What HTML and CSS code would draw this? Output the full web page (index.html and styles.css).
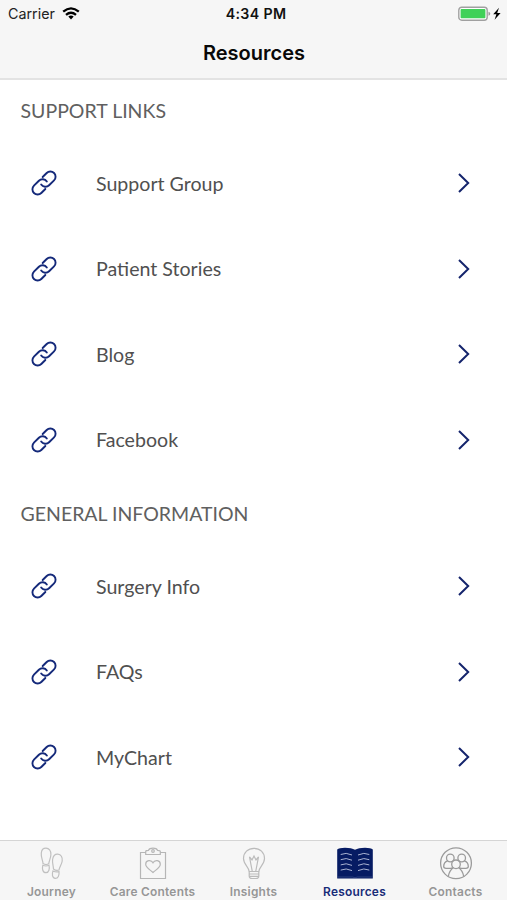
FILE: index.html
```html
<!DOCTYPE html>
<html lang="en">
<head>
<meta charset="utf-8">
<title>Resources</title>
<link rel="stylesheet" href="styles.css">
</head>
<body>
<svg class="defs" width="0" height="0" aria-hidden="true">
  <symbol id="link" viewBox="-14 -14 28 28">
    <g transform="rotate(-45)" fill="none" stroke="currentColor" stroke-width="1.9" stroke-linecap="round">
      <path d="M-3.300 5.200H-9A5.200 5.200 0 0 1-9-5.200H-2A5.200 5.200 0 0 1 3 1"/>
      <path d="M3.300-5.200H9A5.200 5.200 0 0 1 9 5.200H2A5.200 5.200 0 0 1-3-1"/>
    </g>
  </symbol>
  <symbol id="chevron" viewBox="0 0 14 22">
    <path d="M2 2L11.2 11L2 20" fill="none" stroke="currentColor" stroke-width="2"/>
  </symbol>
</svg>
<div class="screen">
  <header class="header">
    <div class="status">
      <div class="carrier"><span>Carrier</span>
        <svg width="18" height="13" viewBox="0 0 18 13"><g fill="none" stroke="#000" stroke-width="2.3"><path d="M1.2 4.7Q9-2 16.8 4.7"/><path d="M4 7.8Q9 3.6 14 7.8"/></g><path d="M6.3 9.6Q9 7.6 11.7 9.6L9 12.4Z"/></svg>
      </div>
      <div class="time">4:34 PM</div>
      <div class="power">
        <svg width="46" height="16" viewBox="0 0 46 16"><rect x=".8" y="1.2" width="28.4" height="13" rx="3" fill="#fff" stroke="#a0a0a0" stroke-width="1.4"/><rect x="2.600" y="3.100" width="24.800" height="9.200" rx=".8" fill="#3fd158"/><path d="M30.500 5.700Q32.300 6.200 32.300 7.700T30.500 9.700Z" fill="#999"/><path d="M41 1.800L35.200 8.300H38.400L36.600 13.800L42.600 7H39.200Z"/></svg>
      </div>
    </div>
    <h1>Resources</h1>
  </header>
  <main>
    <section>
      <h2>SUPPORT LINKS</h2>
      <ul>
        <li><svg class="link"><use href="#link"/></svg><span>Support Group</span><svg class="chevron"><use href="#chevron"/></svg></li>
        <li><svg class="link"><use href="#link"/></svg><span>Patient Stories</span><svg class="chevron"><use href="#chevron"/></svg></li>
        <li><svg class="link"><use href="#link"/></svg><span>Blog</span><svg class="chevron"><use href="#chevron"/></svg></li>
        <li><svg class="link"><use href="#link"/></svg><span>Facebook</span><svg class="chevron"><use href="#chevron"/></svg></li>
      </ul>
    </section>
    <section>
      <h2>GENERAL INFORMATION</h2>
      <ul>
        <li><svg class="link"><use href="#link"/></svg><span>Surgery Info</span><svg class="chevron"><use href="#chevron"/></svg></li>
        <li><svg class="link"><use href="#link"/></svg><span>FAQs</span><svg class="chevron"><use href="#chevron"/></svg></li>
        <li><svg class="link"><use href="#link"/></svg><span>MyChart</span><svg class="chevron"><use href="#chevron"/></svg></li>
      </ul>
    </section>
  </main>
  <nav>
    <a class="tab">
      <svg width="36" height="36" viewBox="0 0 36 36"><g fill="none" stroke="#c0c0c0" stroke-width="1.2"><path d="M9 18.500C8.800 15 6.800 12 7.300 8C7.600 4.700 9.500 3.200 12 3.200C15 3.200 17 5.800 16.900 9.500C16.800 13 15.200 15.500 14.700 18.800Q12 20.400 9 18.500Z"/><path d="M8.800 20.300Q12 21.700 15 20.300C15.800 23.500 15 27.700 12 27.700C8.500 27.700 8 23.500 8.800 20.300Z"/><path d="M19.500 24C19.400 20.500 18.100 18 18.600 14.500C19.100 11 21.200 9 23.900 9.200C27 9.400 28.700 12.200 28.200 16C27.700 19.500 25.600 21.800 25 25Q22 26.200 19.500 24Z"/><path d="M19 25.900Q21.700 27.500 25 26.700C25.500 30.200 24 33.600 21.200 33.400C18.100 33.200 17.800 29 19 25.900Z"/></g></svg>
      <span>Journey</span></a>
    <a class="tab">
      <svg width="36" height="36" viewBox="0 0 36 36"><g fill="none" stroke="#b6b6b6" stroke-width="1.200"><path d="M11 7.500H5.500V33.500H30.500V7.500H25"/><path d="M10.700 9.500V6.500Q10.700 5.300 13.500 5.300Q14.500 3.200 18 3.200T22.500 5.300Q25.300 5.300 25.300 6.500V9.500Z"/><circle cx="18" cy="6" r="1.300"/><path d="M18 27.500C15.500 25 10.700 22.700 10.700 19.200C10.700 15 16.200 14.300 18 17.800C19.800 14.300 25.300 15 25.300 19.200C25.300 22.700 20.500 25 18 27.500Z"/></g></svg>
      <span>Care Contents</span></a>
    <a class="tab">
      <svg width="36" height="36" viewBox="0 0 36 36"><g fill="none" stroke="#bbb" stroke-width="1.200"><path d="M13.200 26.500C13 22 7.500 19.500 7.500 13.500C7.500 7.500 12 3.300 18 3.300S28.500 7.500 28.500 13.500C28.500 19.500 23 22 22.800 26.500Z"/><path d="M13.200 26.500V31Q13.200 33.500 16 33.500H20Q22.800 33.500 22.800 31V26.500M13.200 29H22.800M13.400 31.300H22.600"/><path d="M16.200 26L13.500 12L16 15L18 11L20 15L22.500 12L19.800 26"/></g></svg>
      <span>Insights</span></a>
    <a class="tab active">
      <svg width="40" height="36" viewBox="0 0 40 36"><path d="M2.200 4.600Q4 2.900 10 2.800Q16.500 2.800 20 4.800Q23.500 2.800 30 2.800Q36 2.900 37.800 4.600V33.500H2.200Z" fill="#061b63"/><g fill="none" stroke="#aab3d2" stroke-width="1"><path d="M5.700 9.500Q11 7 17 10M5.700 14.700Q11 12.200 17 15.200M5.700 19.900Q11 17.400 17 20.400M5.700 25.100Q11 22.600 17 25.600M23 10Q29 7 34.300 9.500M23 15.200Q29 12.200 34.300 14.700M23 20.400Q29 17.400 34.300 19.900M23 25.600Q29 22.600 34.300 25.100"/><path d="M2.500 32H17.500Q20 33.500 22.500 32H37.500" stroke="#53649b" stroke-width=".5"/></g></svg>
      <span>Resources</span></a>
    <a class="tab">
      <svg width="36" height="36" viewBox="0 0 36 36"><g fill="none" stroke="#9b9b9b" stroke-width="1.300"><circle cx="18" cy="18.200" r="15.400"/><circle cx="12.300" cy="13" r="3.800"/><circle cx="23.700" cy="13" r="3.800"/><circle cx="18" cy="19.300" r="4.300"/><path d="M9.700 15.900C6.500 16.800 5.700 18.700 5.700 21.500Q5.700 23.300 8 23.300H12Q14 23.500 14.800 22.300M26.300 15.900C29.500 16.800 30.300 18.700 30.300 21.500Q30.300 23.300 28 23.300H24Q22 23.500 21.200 22.300M15.500 22.700C12.500 24.500 11 27.500 10.300 31.300M20.500 22.700C23.500 24.500 25 27.500 25.700 31.300"/></g></svg>
      <span>Contacts</span></a>
  </nav>
</div>
</body>
</html>
```

FILE: styles.css
```css
* { box-sizing: border-box; }
body { margin: 0; background: #fff; font-family: Lato, sans-serif; }
.defs { display: block; }
.screen { width: 507px; height: 900px; display: flex; flex-direction: column; overflow: hidden; }
svg { display: block; flex: none; }
.header { height: 80px; background: #f6f6f6; border-bottom: 2px solid #e3e3e3; font-family: Inter, sans-serif; }
.status { height: 27px; display: grid; grid-template-columns: 1fr auto 1fr; align-items: center; padding: 0 3px 0 8px; color: #222; }
.carrier { display: flex; align-items: center; gap: 7px; font-size: 14.3px; }
.time { font-size: 14.2px; font-weight: 600; letter-spacing: .35px; color: #111; }
.power { display: flex; justify-content: flex-end; }
h1 { margin: 0; padding-left: 1px; text-align: center; font-size: 20px; line-height: 52px; font-weight: 600; color: #080808; }
main { flex: 1; }
h2 { margin: 0; height: 61px; line-height: 61.5px; padding-left: 20.5px; font-size: 19.5px; font-weight: 400; color: #606060; }
ul { margin: 0; padding: 0; list-style: none; }
li { height: 85.5px; display: flex; align-items: center; padding: 0 36px 1px 29.5px; font-size: 19.6px; color: #505050; }
li span { flex: 1; padding-left: 38.5px; }
.link { width: 28px; height: 28px; color: #14297a; }
.chevron { width: 14px; height: 22px; color: #14246c; }
nav { height: 60px; background: #f6f6f6; border-top: 1px solid #d5d5d5; display: grid; grid-template-columns: repeat(5, 101px); padding-left: 1px; }
.tab { display: flex; flex-direction: column; align-items: center; padding-top: 4px; font: 600 11.9px/16px Inter, sans-serif; color: #969696; white-space: nowrap; }
.tab span { margin-top: 3px; letter-spacing: .25px; }
.active { color: #182c78; }
```
